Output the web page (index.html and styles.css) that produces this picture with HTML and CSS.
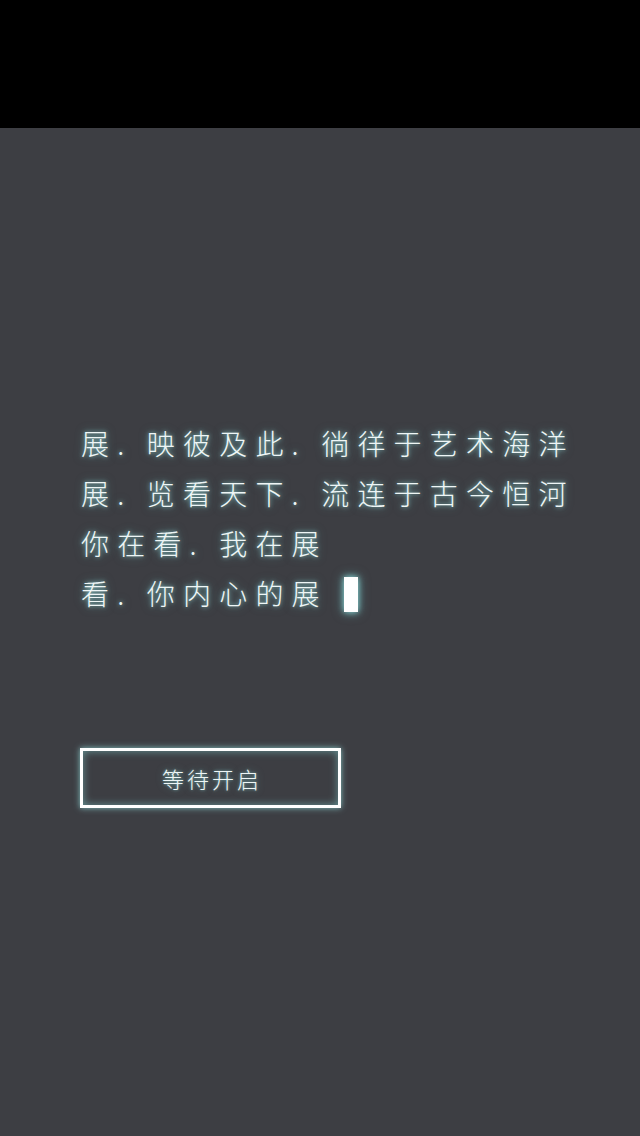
FILE: index.html
```html
<!DOCTYPE html>
<html lang="zh-CN">
<head>
<meta charset="utf-8">
<title>展</title>
<link rel="stylesheet" href="styles.css">
</head>
<body>
<div class="topbar"></div>
<main class="stage">
  <div class="poem">
    <p class="line">展. 映彼及此. 徜徉于艺术海洋</p>
    <p class="line">展. 览看天下. 流连于古今恒河</p>
    <p class="line">你在看. 我在展</p>
    <p class="line">看. 你内心的展 <span class="cursor"></span></p>
  </div>
  <div class="btn">等待开启</div>
</main>
</body>
</html>
```
FILE: styles.css
```css
html, body {
  margin: 0;
  padding: 0;
  background: #3d3e43;
}
body {
  width: 640px;
  height: 1136px;
  overflow: hidden;
  font-family: "Noto Sans CJK SC", "Noto Sans", sans-serif;
}
.topbar {
  height: 128px;
  background: #000;
}
.stage {
  padding: 290px 0 0 81px;
}
.poem {
  color: #eef6f6;
  font-size: 28px;
  line-height: 50px;
  letter-spacing: 8.2px;
  font-weight: 300;
  text-shadow: 0 0 4px rgba(150, 225, 225, 0.8), 0 0 10px rgba(110, 200, 200, 0.5);
}
.line {
  margin: 0;
  white-space: nowrap;
}
.cursor {
  display: inline-block;
  width: 14px;
  height: 35px;
  margin-left: 2px;
  background: #ffffff;
  vertical-align: -7px;
  box-shadow: 0 0 6px rgba(150, 230, 230, 0.9), 0 0 12px rgba(110, 200, 200, 0.6);
}
.btn {
  box-sizing: border-box;
  margin: 130px 0 0 -1px;
  width: 261px;
  height: 60px;
  border: 3px solid #ffffff;
  display: flex;
  align-items: center;
  justify-content: center;
  color: #eef6f6;
  font-size: 22px;
  font-weight: 300;
  letter-spacing: 3px;
  padding-left: 3px;
  text-shadow: 0 0 3px rgba(150, 225, 225, 0.7), 0 0 8px rgba(110, 200, 200, 0.4);
  box-shadow: 0 0 6px rgba(150, 225, 225, 0.8), inset 0 0 8px rgba(130, 210, 210, 0.6);
}
```
